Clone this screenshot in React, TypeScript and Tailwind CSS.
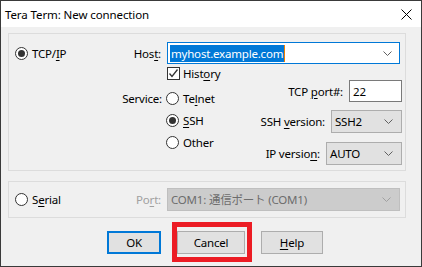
import React from "react";

function Radio({ checked }: { checked?: boolean }) {
  return (
    <span className="w-[13px] h-[13px] rounded-full border border-[#333333] bg-white flex items-center justify-center shrink-0">
      {checked && <span className="w-[7px] h-[7px] rounded-full bg-[#333333]" />}
    </span>
  );
}

function Chevron({ color = "#606060" }: { color?: string }) {
  return (
    <svg width="9" height="5" viewBox="0 0 9 5" className="shrink-0">
      <path d="M0.5 0.5 L4.5 4.5 L8.5 0.5" fill="none" stroke={color} strokeWidth="1" />
    </svg>
  );
}

function Select({ value, width }: { value: string; width: string }) {
  return (
    <div
      className={`${width} h-[23px] bg-[#e1e1e1] border border-[#adadad] flex items-center justify-between pl-[3px] pr-[8px]`}
    >
      <span>{value}</span>
      <Chevron />
    </div>
  );
}

export default function App() {
  return (
    <div className="w-[422px] h-[267px] bg-[#f0f0f0] border border-[#3a3a3a] flex flex-col text-[11.5px] tracking-[-0.2px] leading-[15px] text-black font-['Noto_Sans','Noto_Sans_CJK_JP',sans-serif] overflow-hidden">
      {/* Title bar */}
      <div className="h-[26px] bg-white flex items-center justify-between pl-[4px] pr-[9px] shrink-0">
        <span className="text-[11.5px] tracking-[-0.1px]">Tera Term: New connection</span>
        <svg width="11" height="11" viewBox="0 0 11 11">
          <path d="M0.5 0.5 L10.5 10.5 M10.5 0.5 L0.5 10.5" stroke="#000" strokeWidth="1" />
        </svg>
      </div>

      <div className="pl-[7px] pt-[6px]">
        {/* TCP/IP group */}
        <div className="w-[398px] h-[138px] border border-[#dcdcdc] pt-[8px]">
          <div className="flex items-center h-[22px] pl-[6px] pr-[5px]">
            <Radio checked />
            <span className="ml-[4px]">
              TCP/<u className="underline-offset-2">I</u>P
            </span>
            <span className="ml-auto mr-[6px]">
              Hos<u className="underline-offset-2">t</u>:
            </span>
            <div className="w-[233px] h-[22px] bg-white border border-[#0078d7] flex items-center justify-between pl-[2px] pr-[7px]">
              <span className="flex items-center">
                <span className="bg-[#0078d7] text-white px-[1px] leading-[17px]">myhost.example.com</span>
                <span className="w-[1px] h-[17px] bg-[#f08000]" />
              </span>
              <Chevron />
            </div>
          </div>

          <div className="flex">
            {/* Service label */}
            <div className="w-[157px] pt-[23px] flex justify-end pr-[4px]">
              <span className="h-[22px] flex items-center">Service:</span>
            </div>

            {/* History + service radios */}
            <div className="flex flex-col pt-[3px]">
              <div className="flex items-center h-[13px] ml-[1px]">
                <span className="w-[13px] h-[13px] border border-[#333333] bg-white flex items-center justify-center">
                  <svg width="11" height="11" viewBox="0 0 11 11">
                    <path d="M1.5 5.5 L4 8.5 L9.5 1.5" fill="none" stroke="#333" strokeWidth="1.3" />
                  </svg>
                </span>
                <span className="ml-[3px]">
                  Hist<u className="underline-offset-2">o</u>ry
                </span>
              </div>
              <div className="flex flex-col mt-[7px]">
                <div className="h-[22px] flex items-center">
                  <Radio />
                  <span className="ml-[4px]">
                    Te<u className="underline-offset-2">l</u>net
                  </span>
                </div>
                <div className="h-[22px] flex items-center">
                  <Radio checked />
                  <span className="ml-[4px]">
                    <u className="underline-offset-2">S</u>SH
                  </span>
                </div>
                <div className="h-[22px] flex items-center">
                  <Radio />
                  <span className="ml-[4px]">Other</span>
                </div>
              </div>
            </div>

            {/* Port / versions */}
            <div className="ml-auto pr-[3px] pt-[16px] flex flex-col items-end">
              <div className="flex items-center">
                <span className="mr-[6px]">
                  TCP <u className="underline-offset-2">p</u>ort#:
                </span>
                <div className="w-[53px] h-[22px] bg-white border border-[#7a7a7a] flex items-center pl-[3px]">22</div>
              </div>
              <div className="flex items-center mt-[8px]">
                <span className="mr-[6px]">
                  SSH <u className="underline-offset-2">v</u>ersion:
                </span>
                <Select value="SSH2" width="w-[71px]" />
              </div>
              <div className="flex items-center mt-[9px]">
                <span className="mr-[6px]">
                  IP versio<u className="underline-offset-2">n</u>:
                </span>
                <Select value="AUTO" width="w-[76px]" />
              </div>
            </div>
          </div>
        </div>

        {/* Serial group */}
        <div className="w-[398px] h-[37px] border border-[#dcdcdc] mt-[10px] flex items-center pl-[6px] pr-[5px]">
          <Radio />
          <span className="ml-[4px]">
            S<u className="underline-offset-2">e</u>rial
          </span>
          <span className="ml-auto mr-[6px] text-[#a0a0a0]">
            Po<u className="underline-offset-2">r</u>t:
          </span>
          <div className="w-[233px] h-[23px] bg-[#cccccc] border border-[#bfbfbf] flex items-center justify-between pl-[3px] pr-[8px] text-[#6d6d6d]">
            <span>COM1: 通信ポート (COM1)</span>
            <Chevron color="#a0a0a0" />
          </div>
        </div>

        {/* Buttons */}
        <div className="flex gap-[16px] pl-[99px] mt-[13px]">
          <button className="w-[54px] h-[23px] bg-[#e1e1e1] border-2 border-[#0078d7] flex items-center justify-center">
            OK
          </button>
          <div className="relative">
            <button className="w-[68px] h-[23px] bg-[#e1e1e1] border border-[#adadad] flex items-center justify-center">
              Cancel
            </button>
            <div className="absolute left-[-5px] top-[-9px] w-[80px] h-[40px] border-[5px] border-[#ec1c24] pointer-events-none" />
          </div>
          <button className="w-[62px] h-[23px] bg-[#e1e1e1] border border-[#adadad] flex items-center justify-center">
            <span>
              <u className="underline-offset-2">H</u>elp
            </span>
          </button>
        </div>
      </div>
    </div>
  );
}
